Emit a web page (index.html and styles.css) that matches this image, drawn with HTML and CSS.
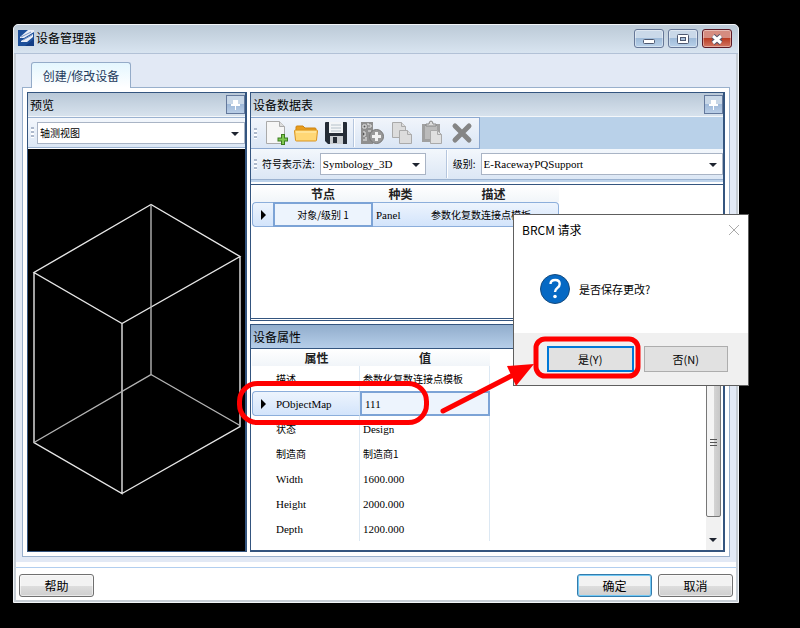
FILE: index.html
```html
<!DOCTYPE html>
<html lang="zh-CN">
<head>
<meta charset="utf-8">
<title>设备管理器</title>
<link rel="stylesheet" href="styles.css">
</head>
<body>
<main class="window">
  <header class="titlebar">
    <svg class="app-icon" width="16" height="16" viewBox="0 0 16 16"><rect width="16" height="16" fill="#1d509b"/><path d="M2 7 10 0h6v2L6 8H2zM3 11l12-7v3L9 12H3z" fill="#e9eef8"/><path d="M3 7 13 2M5 10l9-5" stroke="#7795c4" fill="none"/><path d="M7 16l9-7v7z" fill="#123d85"/></svg>
    <h1 class="title">设备管理器</h1>
    <div class="win-buttons">
      <button class="win-btn" aria-label="最小化"><svg width="28" height="18" viewBox="0 0 28 18"><rect x="8.500" y="9.500" width="11" height="4" rx="1" fill="#fff" stroke="#4d5870"/></svg></button>
      <button class="win-btn" aria-label="最大化"><svg width="28" height="18" viewBox="0 0 28 18"><rect x="8.500" y="4.500" width="11" height="9" rx="1" fill="#fff" stroke="#4d5870"/><rect x="11.500" y="7.500" width="5" height="3" fill="#a5bdd8" stroke="#4d5870"/></svg></button>
      <button class="win-btn win-close" aria-label="关闭"><svg width="28" height="18" viewBox="0 0 28 18"><path d="M10 6l8 7M18 6l-8 7" stroke="#51536a" stroke-width="5"/><path d="M10 6l8 7M18 6l-8 7" stroke="#fff" stroke-width="3"/></svg></button>
    </div>
  </header>
  <div class="client">
    <div class="workspace">
      <nav class="tabs"><button class="tab">创建/修改设备</button></nav>
      <div class="page">
        <section class="panel preview">
          <div class="panel-head"><h2>预览</h2><button class="pin" aria-label="固定"><svg width="17" height="16" viewBox="0 0 17 16"><path d="M6 3h5v4h2v2H9v4H8V9H4V7h2z" fill="#fff"/></svg></button></div>
          <div class="bar"><i class="grip"></i><span class="combo grow"><select aria-label="视图"><option>轴测视图</option></select></span></div>
          <svg class="scene" viewBox="0 0 217 401" aria-label="线框预览"><g fill="none" stroke="#e6e6e6" stroke-width="1.400"><path d="M123 55 6 123l88 51 118-67zM6 123v170l88 51V174M94 344l118-67V107"/><path d="M123 55v170L6 293M123 225l89 51" stroke="#b4b4b4"/></g></svg>
        </section>
        <div class="right">
          <section class="panel data">
            <div class="panel-head"><h2>设备数据表</h2><button class="pin" aria-label="固定"><svg width="17" height="16" viewBox="0 0 17 16"><path d="M6 3h5v4h2v2H9v4H8V9H4V7h2z" fill="#fff"/></svg></button></div>
            <div class="tool-row"><div class="tools">
              <i class="grip"></i>
              <button aria-label="新建"><svg width="24" height="26" viewBox="0 0 24 26"><path d="M2.500 1.500h13l5 5v17h-18z" fill="#f6f6f6" stroke="#aaa"/><path d="M15.500 1.500v5h5" fill="#ddd" stroke="#aaa"/><path d="M19 14v11M13.500 19.500h11" stroke="#3d7c20" stroke-width="4"/><path d="M19 15v9M14.500 19.500H23" stroke="#7ec850" stroke-width="2"/></svg></button>
              <button aria-label="打开"><svg width="24" height="26" viewBox="0 0 24 26"><path d="M2 7q0-1 1-1h6l2 2h10q1 0 1 1v11H2z" fill="#e89d1e" stroke="#cd8311"/><path d="M.500 11q0-1 1-1h21q1 0 1 1l-1 9q0 1-1 1h-19q-1 0-1-1z" fill="#ffd775" stroke="#d99420"/><path d="M2 12h20" stroke="#fff0b8"/></svg></button>
              <button aria-label="保存"><svg width="24" height="26" viewBox="0 0 24 26"><path d="M1 3q0-1 1-1h20q1 0 1 1v21H4l-3-3z" fill="#252c36"/><path d="M5 2h14v11H5z" fill="#f3f5f7"/><path d="M7 5h10M7 8h10M7 11h10" stroke="#b5c1ca"/><path d="M6 16h13v8H6z" fill="#c9cdd1"/><path d="M9 17h4v6H9z" fill="#252c36"/></svg></button>
              <i class="sep"></i>
              <button aria-label="添加设备" disabled><svg width="24" height="26" viewBox="0 0 24 26"><path d="M1 2h12v22H1z" fill="#8f8f8f"/><path d="M3 5h3v3H3zM8 5h3v2H8M3 12h2v4H3M8 11h3M3 20h2M8 3v2M6 17v4" stroke="#eee" fill="#555"/><circle cx="16.500" cy="16.500" r="7" fill="#999" stroke="#777"/><path d="M16.500 12v9M12 16.500h9" stroke="#f2f2f2" stroke-width="3"/></svg></button>
              <button aria-label="复制" disabled><svg width="24" height="26" viewBox="0 0 24 26"><g fill="#dcdcdc" stroke="#aaa"><path d="M2.500 2.500h9l4 4v11h-13z"/><path d="M11.500 2.500v4h4M9.500 10.500h8l4 4v9h-12z"/><path d="M17.500 10.500v4h4"/></g></svg></button>
              <button aria-label="粘贴" disabled><svg width="24" height="26" viewBox="0 0 24 26"><path d="M2 4h18v18H2z" fill="#a0a0a0"/><path d="M5 6h12v13H5z" fill="#bbb"/><path d="M6 6V4h3q0-3 2-3t2 3h3v2z" fill="#ddd" stroke="#888"/><path d="M10.500 10.500h7l4 4v9h-11z" fill="#e0e0e0" stroke="#aaa"/><path d="M17.500 10.500v4h4" fill="none" stroke="#aaa"/></svg></button>
              <button aria-label="删除" disabled><svg width="24" height="26" viewBox="0 0 24 26"><path d="M5 6l14 14M19 6 5 20" stroke="#858585" stroke-width="5" stroke-linecap="round"/></svg></button>
            </div></div>
            <div class="bar filter"><i class="grip"></i><label for="sym">符号表示法:</label><span class="combo sym"><select id="sym" class="latin"><option>Symbology_3D</option></select></span><i class="sep"></i><label for="level">级别:</label><span class="combo grow"><select id="level" class="latin"><option>E-RacewayPQSupport</option></select></span></div>
            <div class="grid-box">
              <table class="grid nodes">
                <colgroup><col class="c-mark"><col class="c-node"><col class="c-kind"><col class="c-desc"></colgroup>
                <thead><tr><th></th><th>节点</th><th>种类</th><th>描述</th></tr></thead>
                <tbody><tr class="current"><td><i class="marker"></i></td><td class="cell-focus center">对象/级别 1</td><td class="latin">Panel</td><td>参数化复数连接点模板</td></tr></tbody>
              </table>
            </div>
          </section>
          <section class="panel props">
            <div class="panel-head blue"><h2>设备属性</h2></div>
            <div class="props-body">
              <table class="grid attrs">
                <colgroup><col class="c-mark"><col class="c-attr"><col class="c-value"></colgroup>
                <thead><tr><th></th><th>属性</th><th>值</th></tr></thead>
                <tbody>
                  <tr><td></td><td>描述</td><td>参数化复数连接点模板</td></tr>
                  <tr class="current"><td><i class="marker"></i></td><td class="latin">PObjectMap</td><td class="latin cell-focus">111</td></tr>
                  <tr><td></td><td>状态</td><td class="latin">Design</td></tr>
                  <tr><td></td><td>制造商</td><td>制造商1</td></tr>
                  <tr><td></td><td class="latin">Width</td><td class="latin">1600.000</td></tr>
                  <tr><td></td><td class="latin">Height</td><td class="latin">2000.000</td></tr>
                  <tr><td></td><td class="latin">Depth</td><td class="latin">1200.000</td></tr>
                </tbody>
              </table>
              <div class="scrollbar"><div class="thumb"><i></i><i></i><i></i></div><span class="down"></span></div>
            </div>
          </section>
        </div>
      </div>
    </div>
    <footer class="actions"><button class="btn help">帮助</button><button class="btn ok">确定</button><button class="btn">取消</button></footer>
  </div>
</main>
<div class="dialog" role="dialog" aria-labelledby="dlg-title">
  <div class="dlg-head"><h2 id="dlg-title">BRCM 请求</h2><button class="dlg-x" aria-label="关闭"><svg width="10" height="10" viewBox="0 0 10 10"><path d="M0 0l10 10M10 0 0 10" stroke="#aaa"/></svg></button></div>
  <div class="dlg-body"><svg width="30" height="30" viewBox="0 0 30 30"><circle cx="15" cy="15" r="14.500" fill="#0669c4" stroke="#164b7e"/><path d="M10.500 10q0-4 4.700-4 4.500 0 4.500 4 0 2.300-2.400 4-2.300 1.700-2.300 4" fill="none" stroke="#fff" stroke-width="2.400"/><circle cx="15" cy="22.500" r="1.800" fill="#fff"/></svg><p>是否保存更改?</p></div>
  <div class="dlg-foot"><button class="dlg-btn default">是(Y)</button><button class="dlg-btn">否(N)</button></div>
</div>
<svg class="marks" width="420" height="110" viewBox="230 325 420 110"><g fill="none" stroke="#f00"><rect x="239.500" y="383.500" width="187" height="39" rx="18" stroke-width="5"/><rect x="536" y="339" width="102" height="37" rx="9" stroke-width="5"/><path d="M443 411l74-38" stroke-width="5" stroke-linecap="round"/></g><path d="M534 364l-27 2 9 20z" fill="#f00"/></svg>
</body>
</html>
```
FILE: styles.css
```css
* { box-sizing: border-box; }
body {
  margin: 0;
  min-height: 100vh;
  padding: 24px 61px 25px 13px;
  display: flex;
  background: #000;
  color: #000;
  font-family: "Noto Sans CJK SC", sans-serif;
  font-size: 12px;
  line-height: 16px;
}
h1, h2, p { margin: 0; font-size: 12px; font-weight: 400; }
button, select { font: inherit; color: inherit; margin: 0; padding: 0; }
svg { display: block; }
i { font-style: normal; display: block; flex: none; }

.window {
  flex: 1;
  min-width: 0;
  display: flex;
  flex-direction: column;
  border: 1px solid #f2f5f8;
  border-radius: 5px 5px 0 0;
  background: #fff;
  overflow: hidden;
}
.titlebar {
  height: 29px;
  padding: 0 6px 3px 4px;
  display: flex;
  align-items: center;
  border-bottom: 1px solid #b2c1d6;
  background: linear-gradient(#bccad7, #d8e4f0);
}
.title { flex: 1; margin-left: 2px; }
.win-buttons { display: flex; gap: 4px; padding-top: 2px; }
.win-btn {
  width: 30px;
  height: 19px;
  border: 1px solid #667797;
  border-radius: 3px;
  background: linear-gradient(#cad9e9 45%, #9fbbd9 50%, #b9d1e9);
  box-shadow: inset 0 0 0 1px #ffffff66;
  overflow: hidden;
}
.win-close { border-color: #5c1925; background: linear-gradient(#d58c80 45%, #bb3d24 50%, #d27763); }

.client {
  flex: 1;
  display: flex;
  flex-direction: column;
  border: 2px solid #c6cdd4;
  border-top: 0;
}
.workspace {
  flex: 1;
  display: flex;
  flex-direction: column;
  padding: 8px 6px 5px;
  background: #e2e9f5;
}
.tabs { display: flex; padding-left: 9px; margin-bottom: -1px; }
.tab {
  position: relative;
  width: 100px;
  height: 26px;
  border: 1px solid #94abc8;
  border-bottom: 0;
  border-radius: 3px 3px 0 0;
  background: linear-gradient(#e4f6fe, #fff);
  color: #1e395b;
}
.page {
  flex: 1;
  display: flex;
  gap: 3px;
  padding: 4px;
  border: 1px solid #99b0cc;
  background: #fff;
}
.panel {
  display: flex;
  flex-direction: column;
  border: 1px solid #34557f;
}
.preview { flex: 0 0 220px; border-right-width: 2px; }
.right { flex: 1; min-width: 0; display: flex; flex-direction: column; gap: 3px; }
.panel-head {
  flex: none;
  height: 24px;
  padding: 0 0 0 2px;
  display: flex;
  align-items: center;
  border-bottom: 1px solid #f4f7fa;
  background: linear-gradient(#b9c8d7, #d7e2ed);
}
.panel-head h2 { flex: 1; }
.panel-head.blue { background: linear-gradient(#91adcc, #b6cee9); border-bottom-color: #34557f; }
.pin {
  width: 19px;
  height: 19px;
  border: 1px solid #64799c;
  background: linear-gradient(#c8d7e7 45%, #9fb9d9 50%, #b9cee6);
}
.bar {
  flex: none;
  height: 31px;
  display: flex;
  align-items: center;
  padding-left: 3px;
  border: 1px solid #9bb2d0;
  border-width: 1px 0;
  background: linear-gradient(#f3f7fc, #dce7f5);
  font-size: 10px;
}
.grip {
  width: 3px;
  height: 11px;
  margin-right: 3px;
  background: repeating-linear-gradient(#adb9cc 0 2px, #fff 2px 4px);
}
.combo {
  position: relative;
  height: 22px;
  border: 1px solid #a9b4c5;
  background: #fff;
}
.combo::after, .down::after {
  content: "";
  position: absolute;
  right: 5px;
  top: 9px;
  border: 4px solid transparent;
  border-top-color: #1e2430;
  border-bottom: 0;
  pointer-events: none;
}
.combo select {
  display: block;
  width: 100%;
  height: 20px;
  padding: 0 2px;
  border: 0;
  appearance: none;
  background: transparent;
}
.grow { flex: 1; min-width: 0; }
.latin, .combo .latin { font-family: "Liberation Serif", serif; font-size: 11px; }
.scene { flex: 1; min-height: 0; width: 100%; margin-top: 1px; background: #000; }

.data { flex: 0 0 229px; border-right-width: 2px; background: #fff; }
.tool-row { flex: none; height: 32px; display: flex; background: #b9d1e9; }
.tools {
  width: 229px;
  display: flex;
  align-items: center;
  padding-left: 3px;
  border: 1px solid #8ba8d0;
  border-left: 0;
  background: linear-gradient(#f1f5fb, #dae6f5);
}
.tools .grip { margin-right: 7px; }
.tools button { width: 24px; height: 26px; margin-right: 6px; border: 0; background: none; }
.tools .sep { margin-right: 5px; margin-left: -1px; }
.sep { width: 2px; height: 28px; background: linear-gradient(90deg, #b5c6de 50%, #fff 50%); }
.filter { border-top: 0; box-shadow: 0 2px #bdd3eb; }
.filter .grip { margin-right: 5px; }
.filter label { white-space: nowrap; margin-right: 5px; }
.sym { width: 106px; margin-right: 20px; }
.filter .sep { margin-right: 5px; }
.grid-box { flex: 1; margin-top: 4px; margin-bottom: 1px; border: 1px solid #34557f; border-width: 1px 0; }

.grid { border-collapse: separate; border-spacing: 0; table-layout: fixed; font-size: 10px; line-height: 12px; }
.grid th { height: 17px; padding: 0; font-size: 12px; line-height: 16px; font-weight: 700; color: #222; background: linear-gradient(#fff, #f1f5f9); }
.grid td { height: 25px; padding: 0 3px; white-space: nowrap; }
.grid .latin { font-size: 11px; }
.nodes { width: 307px; margin-left: 1px; }
.c-mark { width: 21px; }
.c-node { width: 100px; }
.c-kind { width: 55px; }
.c-desc { width: 131px; }
.center { text-align: center; }
.current td { border: 1px solid #8caedb; border-width: 1px 0; background: linear-gradient(#edf4fd, #d3e4fb); }
.current td:first-child { border-left-width: 1px; border-radius: 4px 0 0 4px; }
.current td:last-child { border-right-width: 1px; border-radius: 0 4px 4px 0; }
.current td.cell-focus { border: 2px solid #7ca3d6; border-radius: 0; background: #edf4fd; }
.marker { margin-left: 5px; width: 0; border: 5px solid transparent; border-left-color: #000; border-right: 0; }

.props { flex: 1; border-right-width: 2px; border-bottom-width: 2px; }
.props-body { flex: 1; display: flex; justify-content: space-between; align-items: stretch; }
.attrs { width: 238px; margin-left: 1px; align-self: flex-start; }
.c-attr { width: 87px; }
.c-value { width: 130px; }
.attrs td + td { border-right: 1px solid #dce8f3; }
.scrollbar { width: 15px; margin-right: 2px; display: flex; flex-direction: column; background: #f1f1f1; }
.thumb {
  flex: 1;
  display: flex;
  flex-direction: column;
  align-items: center;
  gap: 2px;
  padding-top: 89px;
  border: 1px solid #777;
  border-radius: 2px;
  background: linear-gradient(90deg, #f4f4f4 50%, #d3d3d3 55%, #c7c7c7);
}
.thumb i { width: 7px; height: 1px; background: #555; }
.down { position: relative; height: 33px; }
.down::after { right: 4px; top: 21px; }

.actions {
  flex: none;
  display: flex;
  gap: 6px;
  margin-top: 5px;
  padding: 6px 3px 3px;
  border-top: 1px solid #b1ceef;
}
.btn {
  width: 75px;
  height: 23px;
  border: 1px solid #707070;
  border-radius: 3px;
  background: linear-gradient(#f2f2f2 50%, #dddddd 52%, #cfcfcf);
  box-shadow: inset 0 0 0 1px #fff8;
}
.help { margin-right: auto; }
.ok { border-color: #347bab; box-shadow: inset 0 0 0 1px #72c9f5; }

.dialog {
  position: absolute;
  left: 513px;
  top: 214px;
  width: 236px;
  border: 1px solid #5e5e5e;
  background: #fff;
}
.dlg-head { display: flex; align-items: center; justify-content: space-between; height: 29px; padding: 0 9px 0 8px; }
.dlg-x { border: 0; background: none; }
.dlg-body { display: flex; align-items: center; gap: 9px; height: 89px; padding: 0 26px; }
.dlg-body p { font-size: 11px; }
.dlg-foot { display: flex; gap: 10px; padding: 13px 20px 13px 33px; background: #f0f0f0; }
.dlg-btn { flex: 1; height: 26px; border: 1px solid #adadad; background: #e1e1e1; font-size: 11px; }
.default { border: 2px solid #0078d7; }
.marks { position: absolute; left: 230px; top: 325px; pointer-events: none; }
```
